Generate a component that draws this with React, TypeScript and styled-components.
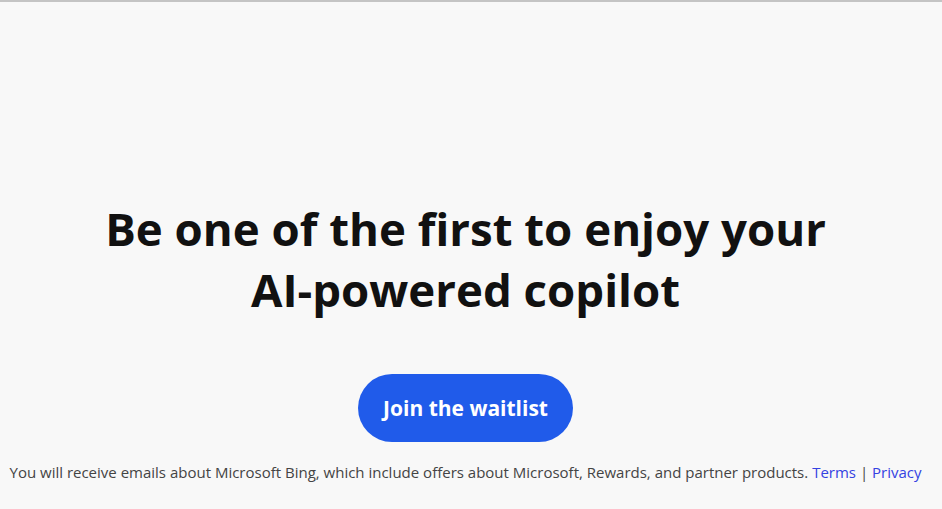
import React from "react";
import styled, { createGlobalStyle } from "styled-components";

const Global = createGlobalStyle`
  html, body { margin: 0; padding: 0; background: #f8f8f8; }
  body { font-family: "Open Sans", "Noto Sans", sans-serif; }
`;

const Page = styled.div`
  box-sizing: border-box;
  height: 509px;
  border-top: 2px solid #c4c4c4;
  display: flex;
  flex-direction: column;
  align-items: center;
  padding-top: 196px;
  padding-right: 11px;
`;

const Heading = styled.h1`
  margin: 0;
  font-family: "Open Sans", sans-serif;
  font-weight: 700;
  font-size: 45.6px;
  line-height: 61px;
  color: #111111;
  text-align: center;
  width: 760px;
`;

const WaitButton = styled.button`
  margin-top: 54px;
  width: 215px;
  height: 68px;
  border: none;
  border-radius: 34px;
  background: #205bea;
  color: #ffffff;
  font-family: "Open Sans", sans-serif;
  font-weight: 700;
  font-size: 21px;
  cursor: pointer;
`;

const Disclaimer = styled.p`
  margin: 20px 0 0;
  font-family: "Open Sans", sans-serif;
  font-size: 15px;
  color: #444444;
  text-align: center;
  white-space: nowrap;
`;

const Link = styled.a`
  color: #3442e2;
  text-decoration: none;
`;

export default function App() {
  return (
    <>
      <Global />
      <Page>
        <Heading>Be one of the first to enjoy your AI-powered copilot</Heading>
        <WaitButton>Join the waitlist</WaitButton>
        <Disclaimer>
          You will receive emails about Microsoft Bing, which include offers about Microsoft, Rewards, and partner products.{" "}
          <Link href="#">Terms</Link> | <Link href="#">Privacy</Link>
        </Disclaimer>
      </Page>
    </>
  );
}
